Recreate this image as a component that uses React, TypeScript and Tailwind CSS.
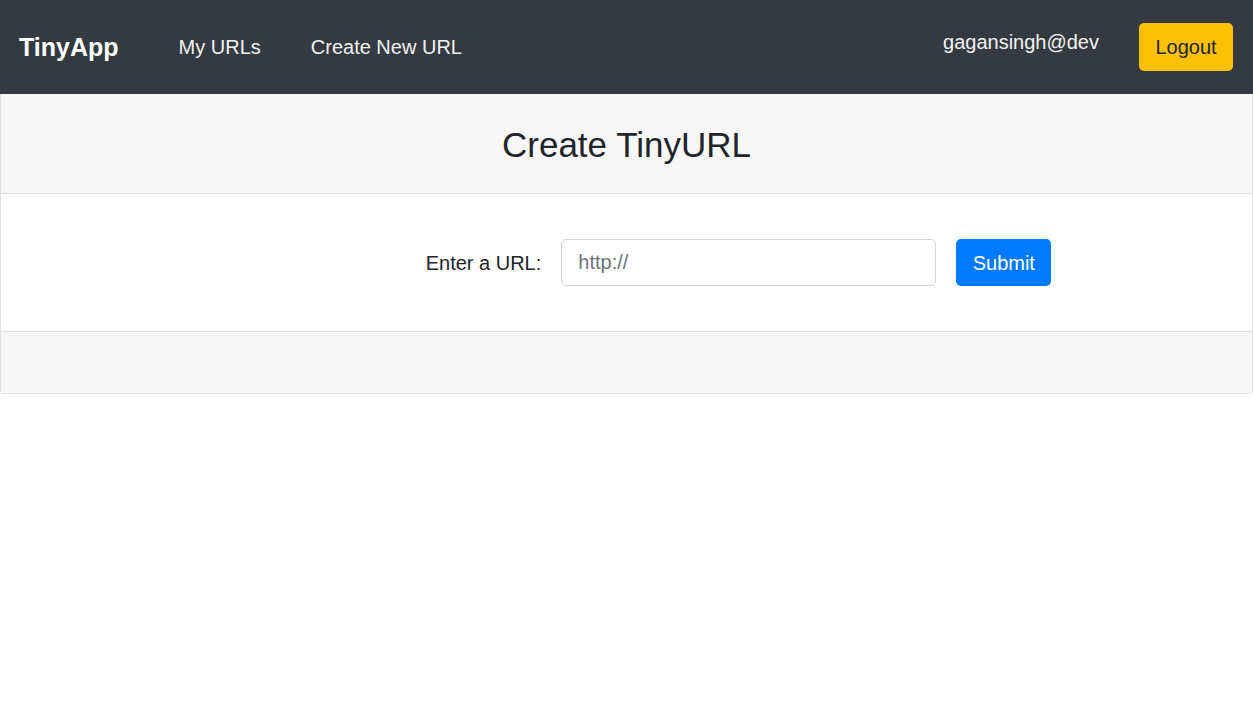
import React, { useState } from 'react';

const NAV_LINKS = ['My URLs', 'Create New URL'];

export default function App() {
  const [url, setUrl] = useState('');

  return (
    <div className="min-h-screen bg-white font-['Liberation_Sans',Arial,sans-serif] text-[#212529]">
      {/* navbar */}
      <nav className="flex h-[94px] items-center bg-[#343a40] pl-[19px] pr-[20px]">
        <a className="text-[25px] font-bold leading-none text-white">TinyApp</a>
        <div className="ml-[60px] flex items-center gap-[50px]">
          {NAV_LINKS.map(link => (
            <a key={link} className="text-[20px] leading-none text-[#f2f2f2]">
              {link}
            </a>
          ))}
        </div>
        <div className="ml-auto flex items-center gap-[40px]">
          <span className="mb-[10px] text-[20px] leading-none text-[#f2f2f2]">gagansingh@dev</span>
          <button className="h-[48px] w-[94px] rounded-[5px] bg-[#ffc107] text-[20px] text-[#212529]">
            Logout
          </button>
        </div>
      </nav>

      {/* card */}
      <div className="rounded-b-[4px] border border-t-0 border-[#dfdfdf]">
        <div className="flex h-[100px] items-center justify-center border-b border-[#dfdfdf] bg-[#f7f7f7] pt-[2px]">
          <h2 className="text-[35px] leading-none">Create TinyURL</h2>
        </div>
        <div className="flex justify-center py-[45px] pl-[224px]">
          <form className="flex items-center gap-[20px]" onSubmit={e => e.preventDefault()}>
            <label className="text-[20px]">Enter a URL:</label>
            <input
              value={url}
              onChange={e => setUrl(e.target.value)}
              placeholder="http://"
              className="h-[47px] w-[375px] rounded-[5px] border border-[#ced4da] px-[16px] text-[20px] text-[#495057] outline-none placeholder:text-[#6c757d]"
            />
            <button className="h-[47px] w-[95px] rounded-[5px] bg-[#007bff] text-[20px] text-white">
              Submit
            </button>
          </form>
        </div>
        <div className="h-[62px] border-t border-[#dfdfdf] bg-[#f7f7f7]" />
      </div>
    </div>
  );
}
